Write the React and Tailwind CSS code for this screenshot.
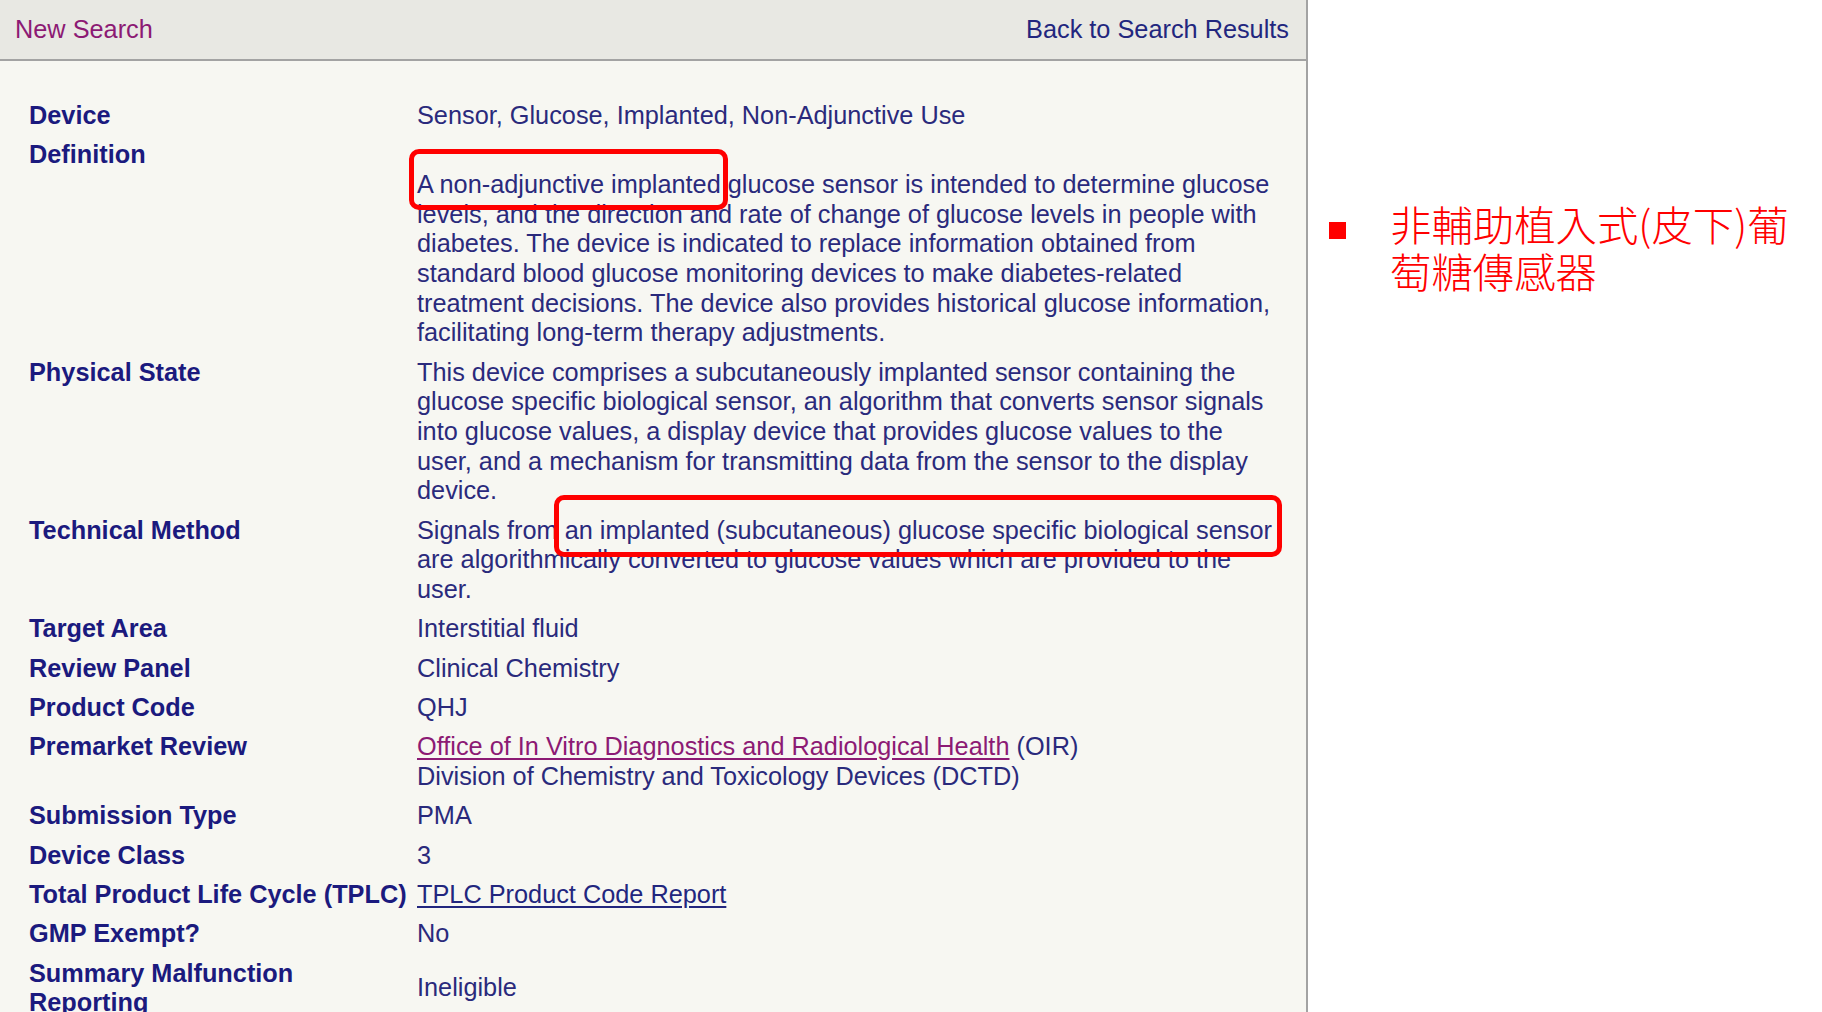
import React from "react"

function Mark({ children, className }) {
  return (
    <span className="relative">
      {children}
      <span className={`pointer-events-none absolute rounded-[10px] border-[5px] border-[#ff0000] ${className}`} />
    </span>
  )
}

function Row({ label, children, center }) {
  return (
    <div className={`grid grid-cols-[388px_1fr] py-[4.8px] ${center ? "items-center" : "items-start"}`}>
      <div className="font-bold text-[#1b1a7e]">{label}</div>
      <div className="text-[#2a2a7c]">{children}</div>
    </div>
  )
}

export default function App() {
  return (
    <div className="flex min-h-[1012px] bg-white font-['Liberation_Sans',Arial,sans-serif] text-[25.3px] leading-[29.7px]">
      <div className="w-[1308px] shrink-0 border-r-2 border-[#a3a3a3] bg-[#f7f7f2]">
        <div className="flex h-[61px] items-center justify-between border-b-2 border-[#a3a3a3] bg-[#e8e8e3] pl-[15px] pr-[17px]">
          <a className="text-[#8c1a74]">New Search</a>
          <a className="text-[#22267e]">Back to Search Results</a>
        </div>

        <div className="pl-[29px] pt-[35px]">
          <Row label="Device">Sensor, Glucose, Implanted, Non-Adjunctive Use</Row>
          <Row label="Definition">
            <div className="whitespace-nowrap">
              <br />
              <Mark className="-left-[8px] -right-[7px] -top-[21px] -bottom-[12px]">A non-adjunctive implanted</Mark> glucose sensor is intended to determine glucose
              <br />
              levels, and the direction and rate of change of glucose levels in people with
              <br />
              diabetes. The device is indicated to replace information obtained from
              <br />
              standard blood glucose monitoring devices to make diabetes-related
              <br />
              treatment decisions. The device also provides historical glucose information,
              <br />
              facilitating long-term therapy adjustments.
            </div>
          </Row>
          <Row label="Physical State">
            <div className="whitespace-nowrap">
              This device comprises a subcutaneously implanted sensor containing the
              <br />
              glucose specific biological sensor, an algorithm that converts sensor signals
              <br />
              into glucose values, a display device that provides glucose values to the
              <br />
              user, and a mechanism for transmitting data from the sensor to the display
              <br />
              device.
            </div>
          </Row>
          <Row label="Technical Method">
            <div className="whitespace-nowrap">
              Signals from{" "}
              <Mark className="-left-[11px] -right-[10px] -top-[21px] -bottom-[13px]">
                an implanted (subcutaneous) glucose specific biological sensor
              </Mark>
              <br />
              are algorithmically converted to glucose values which are provided to the
              <br />
              user.
            </div>
          </Row>
          <Row label="Target Area">Interstitial fluid</Row>
          <Row label="Review Panel">Clinical Chemistry</Row>
          <Row label="Product Code">QHJ</Row>
          <Row label="Premarket Review">
            <a className="text-[#8c1a74] underline underline-offset-[3px]">Office of In Vitro Diagnostics and Radiological Health</a> (OIR)
            <br />
            Division of Chemistry and Toxicology Devices (DCTD)
          </Row>
          <Row label="Submission Type">PMA</Row>
          <Row label="Device Class">3</Row>
          <Row label="Total Product Life Cycle (TPLC)">
            <a className="text-[#22267e] underline underline-offset-[3px]">TPLC Product Code Report</a>
          </Row>
          <Row label="GMP Exempt?">No</Row>
          <Row label="Summary Malfunction Reporting" center>
            Ineligible
          </Row>
        </div>
      </div>

      <div className="flex items-start pt-[200px] pl-[21px]">
        <span className="mt-[22px] h-[17px] w-[17px] shrink-0 bg-[#ff0000]" />
        <p className="ml-[44px] font-['Noto_Sans_CJK_TC','Noto_Sans',sans-serif] text-[41.4px] font-light leading-[47px] text-[#ff0000]">
          非輔助植入式(皮下)葡
          <br />
          萄糖傳感器
        </p>
      </div>
    </div>
  )
}
